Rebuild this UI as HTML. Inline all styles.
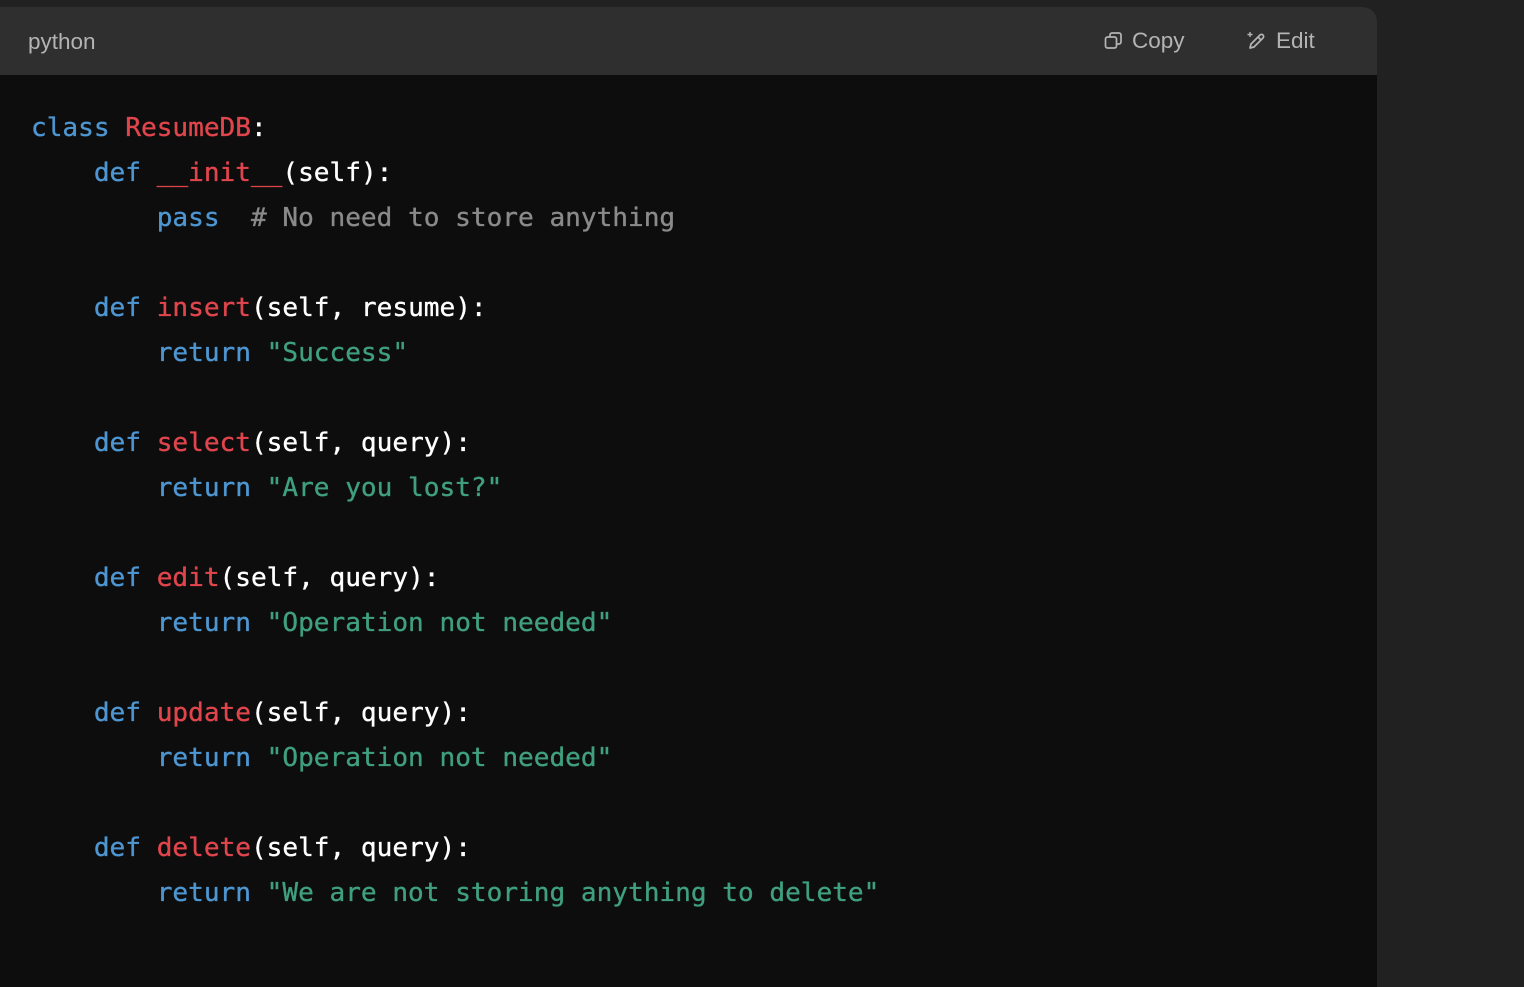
<!DOCTYPE html>
<html><head><style>
html,body{margin:0;padding:0;background:#212121;width:1524px;height:970px;overflow:hidden}
.blk{position:absolute;left:0;top:7px;width:1377px;height:980px;background:#0d0d0d;border-radius:0 14px 0 0;overflow:hidden}
.hd{height:68px;background:#2f2f2f;position:relative;font-family:"Liberation Sans",sans-serif;color:#b4b4b4;font-size:22.5px}
.hd .l{position:absolute;left:28px;top:22px}
.btn{position:absolute;top:21px;display:flex;align-items:center;gap:8px}
pre{margin:0;padding:31px 0 0 31px;font-family:"DejaVu Sans Mono","Liberation Mono",monospace;font-size:26.1px;line-height:45px;color:#fff;-webkit-text-stroke:0.35px currentColor}
.k{color:#4d96d2}.f{color:#e0454c}.s{color:#3f9f7f}.c{color:#8a8a8a}
</style></head><body>
<div class="blk">
<div class="hd"><span class="l">python</span>
<span class="btn" style="left:1104px"><svg width="20" height="20" viewBox="0 0 20 20" fill="none" stroke="#b4b4b4" stroke-width="1.7"><rect x="1.5" y="6" width="11" height="11" rx="2"/><path d="M6 6V4a2 2 0 0 1 2-2h7a2 2 0 0 1 2 2v7a2 2 0 0 1-2 2h-2.5"/></svg>Copy</span>
<span class="btn" style="left:1247px"><svg width="21" height="20" viewBox="0 0 21 20" fill="none" stroke="#b4b4b4" stroke-width="1.7" stroke-linejoin="round"><path d="M3 17l1-4 9-9a2 2 0 0 1 3 3l-9 9z"/><path d="M11 6l3 3"/><path d="M3 1v5M0.5 3.5h5" stroke-width="1.4"/></svg>Edit</span>
</div>
<pre><span class="k">class</span> <span class="f">ResumeDB</span>:
    <span class="k">def</span> <span class="f">__init__</span>(self):
        <span class="k">pass</span>  <span class="c"># No need to store anything</span>

    <span class="k">def</span> <span class="f">insert</span>(self, resume):
        <span class="k">return</span> <span class="s">"Success"</span>

    <span class="k">def</span> <span class="f">select</span>(self, query):
        <span class="k">return</span> <span class="s">"Are you lost?"</span>

    <span class="k">def</span> <span class="f">edit</span>(self, query):
        <span class="k">return</span> <span class="s">"Operation not needed"</span>

    <span class="k">def</span> <span class="f">update</span>(self, query):
        <span class="k">return</span> <span class="s">"Operation not needed"</span>

    <span class="k">def</span> <span class="f">delete</span>(self, query):
        <span class="k">return</span> <span class="s">"We are not storing anything to delete"</span>
</pre>
</div>
</body></html>
